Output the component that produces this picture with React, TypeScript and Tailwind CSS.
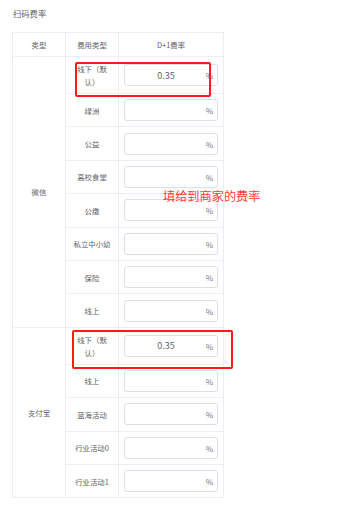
const FONT = { fontFamily: '"Noto Sans CJK SC", "Noto Sans", sans-serif' };

type Row = { name: string; value?: string; first?: boolean };

const groups: { label: string; rows: Row[] }[] = [
  {
    label: '微信',
    rows: [
      { name: '线下（默认）', value: '0.35', first: true },
      { name: '绿洲' },
      { name: '公益' },
      { name: '高校食堂' },
      { name: '公缴' },
      { name: '私立中小幼' },
      { name: '保险' },
      { name: '线上' },
    ],
  },
  {
    label: '支付宝',
    rows: [
      { name: '线下（默认）', value: '0.35', first: true },
      { name: '线上' },
      { name: '蓝海活动' },
      { name: '行业活动0' },
      { name: '行业活动1' },
    ],
  },
];

function RateInput({ value }: { value?: string }) {
  return (
    <div className="relative mx-auto h-[22px] w-[94px] rounded-[3px] border border-[#dcdfe6] bg-white">
      <input
        readOnly
        value={value ?? ''}
        className="h-full w-full bg-transparent pl-[4px] pr-[14px] text-center text-[9px] text-[#606266] outline-none"
        style={FONT}
      />
      <span className="absolute right-[4px] top-1/2 -translate-y-1/2 text-[8px] text-[#75787f]">%</span>
    </div>
  );
}

export default function App() {
  return (
    <div className="relative h-[506px] w-[355px] overflow-hidden bg-white text-[#606266]" style={FONT}>
      <div className="px-[13px] pt-[7px] text-[8.3px] leading-[12px] text-[#606266]">扫码费率</div>

      <table className="ml-[12px] mt-[13px] w-[211px] table-fixed border-collapse text-[7.4px] leading-[13px]">
        <colgroup>
          <col className="w-[53px]" />
          <col className="w-[53px]" />
          <col className="w-[105px]" />
        </colgroup>
        <thead>
          <tr className="h-[24px]">
            <th className="border border-[#ebeef5] font-normal">类型</th>
            <th className="border border-[#ebeef5] font-normal">费用类型</th>
            <th className="border border-[#ebeef5] font-normal">D+1费率</th>
          </tr>
        </thead>
        <tbody>
          {groups.map((g) =>
            g.rows.map((r, i) => (
              <tr key={g.label + r.name} className={r.first ? 'h-[37px]' : 'h-[33.4px]'}>
                {i === 0 && (
                  <td rowSpan={g.rows.length} className="border border-[#ebeef5] text-center align-middle">
                    {g.label}
                  </td>
                )}
                <td className="border border-[#ebeef5] px-[6px] text-center align-middle">{r.name}</td>
                <td className="border border-[#ebeef5] align-middle">
                  <RateInput value={r.value} />
                </td>
              </tr>
            ))
          )}
        </tbody>
      </table>

      {/* annotations */}
      <div className="absolute left-[75px] top-[62px] h-[35px] w-[136px] rounded-[2px] border-2 border-[#ff1a1a]" />
      <div className="absolute left-[72px] top-[330px] h-[39px] w-[161px] rounded-[2px] border-2 border-[#ff1a1a]" />
      <div className="absolute left-[163px] top-[188px] text-[12.2px] leading-[16px] text-[#ff3b3b]">填给到商家的费率</div>
    </div>
  );
}
